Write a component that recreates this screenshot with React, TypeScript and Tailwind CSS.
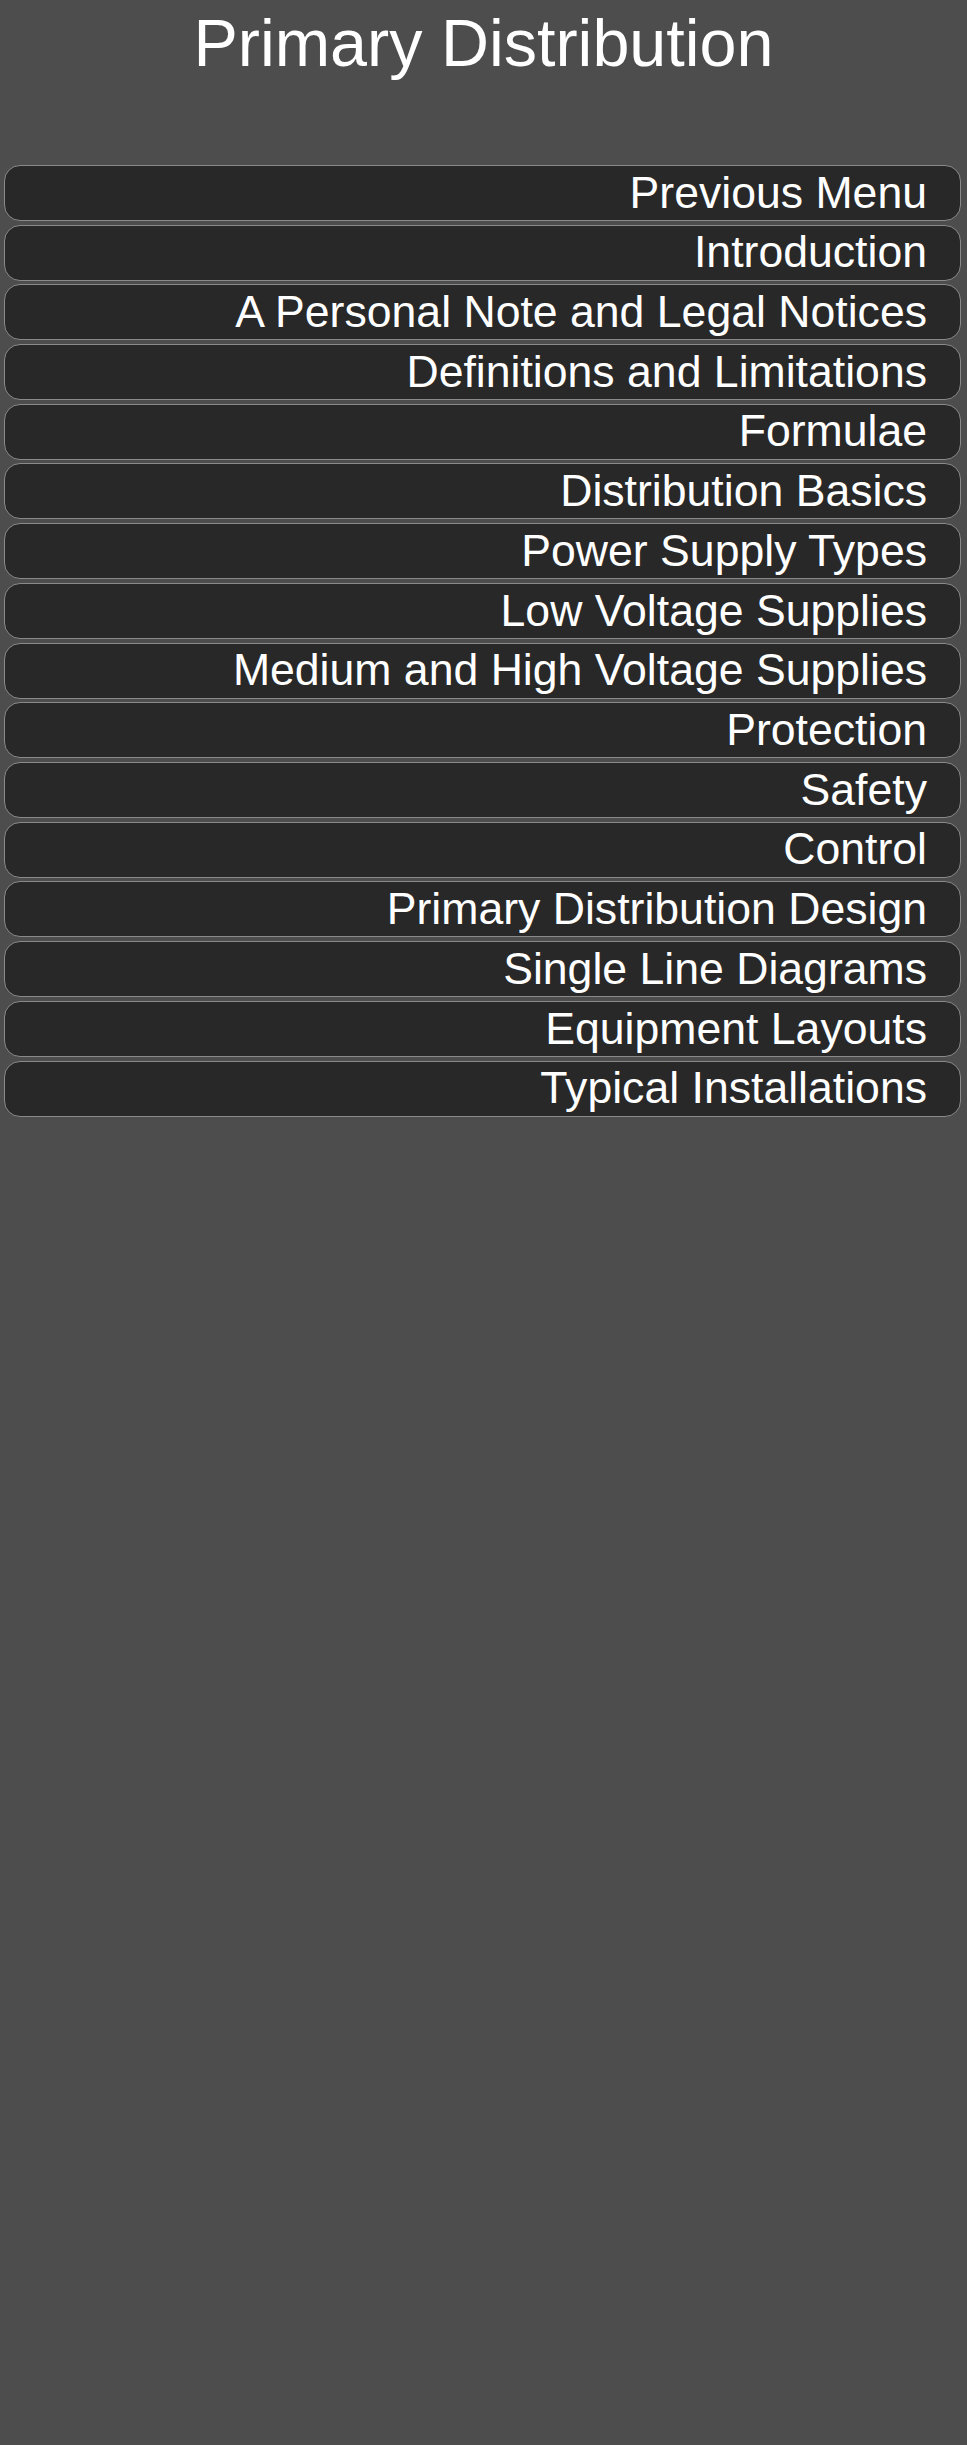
const items = [
  'Previous Menu',
  'Introduction',
  'A Personal Note and Legal Notices',
  'Definitions and Limitations',
  'Formulae',
  'Distribution Basics',
  'Power Supply Types',
  'Low Voltage Supplies',
  'Medium and High Voltage Supplies',
  'Protection',
  'Safety',
  'Control',
  'Primary Distribution Design',
  'Single Line Diagrams',
  'Equipment Layouts',
  'Typical Installations',
];

export default function App() {
  return (
    <div
      className="min-h-[2445px] w-full bg-[#4d4d4d] text-white"
      style={{ fontFamily: '"Liberation Sans", Arial, sans-serif' }}
    >
      <h1 className="pt-[6px] text-center text-[66.5px] font-normal leading-[75.8px]">
        Primary Distribution
      </h1>
      <nav className="mt-[83px] ml-[4px] flex w-[957px] flex-col gap-[3.73px]">
        {items.map((label) => (
          <a
            key={label}
            href="#"
            className="flex h-[56px] items-center justify-end rounded-[16px] border border-[#8a8a8a] bg-[#282828] pr-[33px] text-[44.6px] leading-[50.6px] text-white"
          >
            {label}
          </a>
        ))}
      </nav>
    </div>
  );
}
